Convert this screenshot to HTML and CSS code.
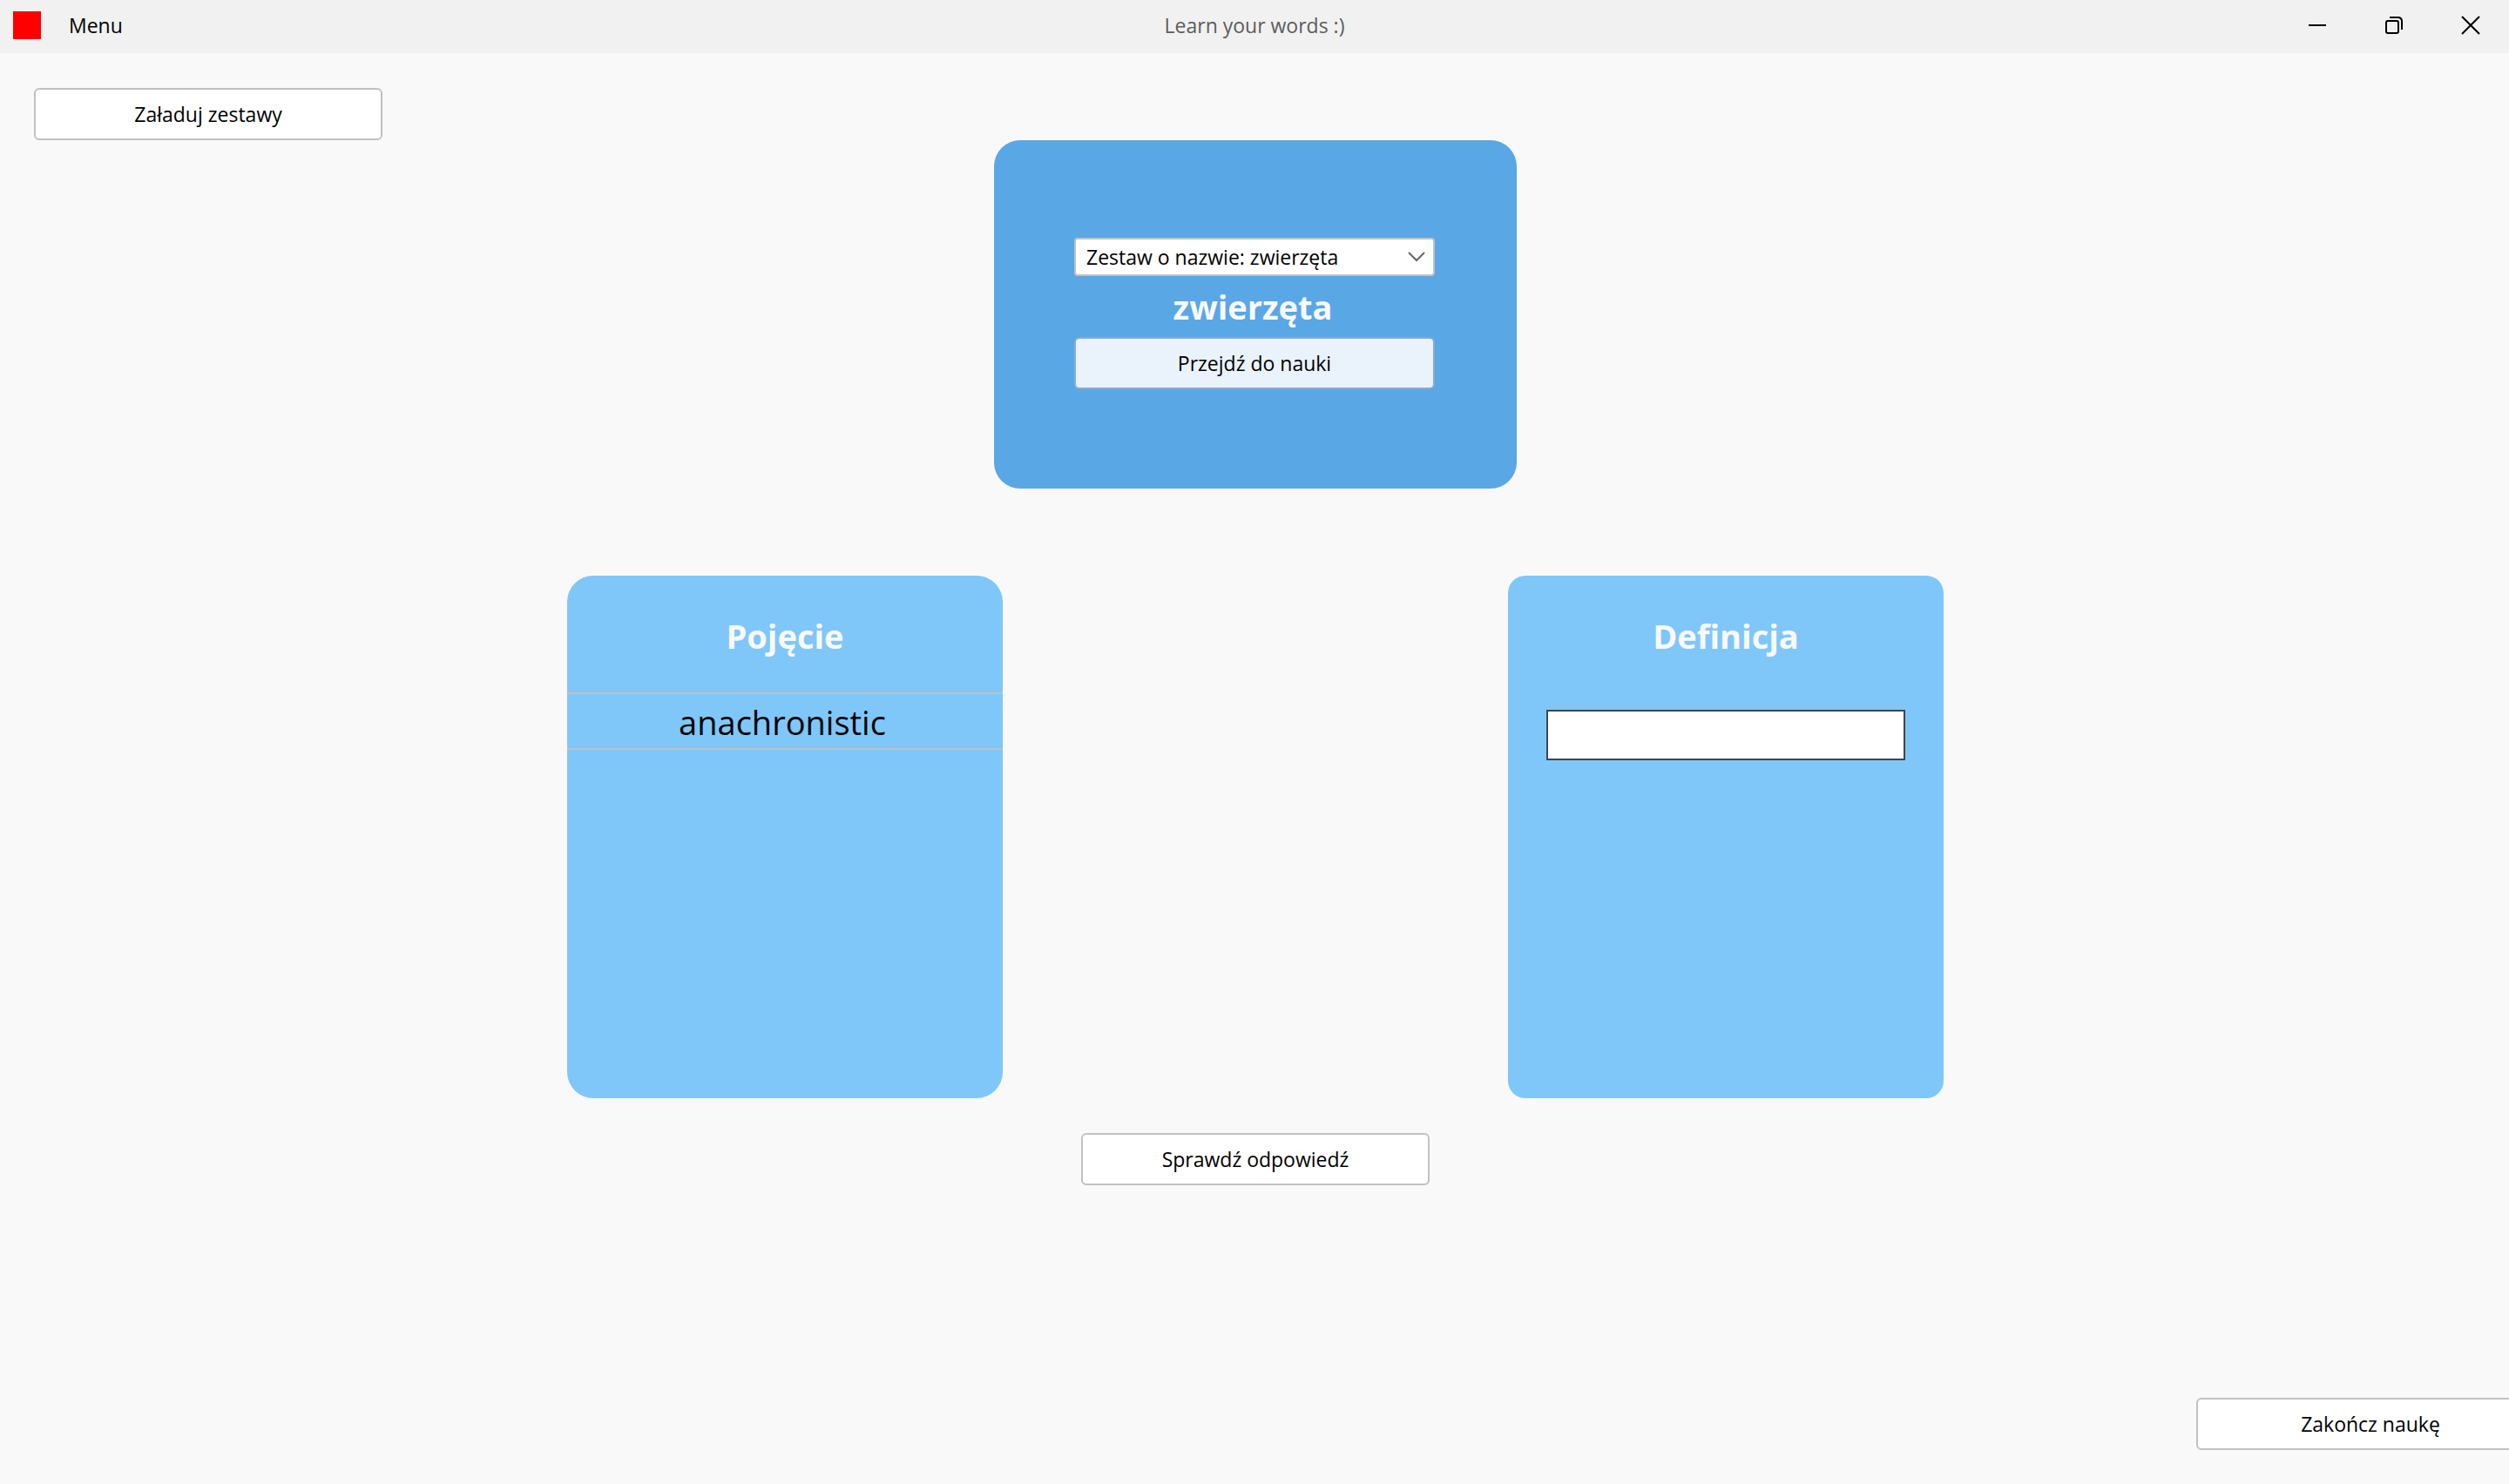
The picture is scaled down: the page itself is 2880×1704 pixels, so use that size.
FILE: index.html
```html
<!DOCTYPE html>
<html lang="pl">
<head>
<meta charset="utf-8">
<meta name="viewport" content="width=device-width, initial-scale=1">
<title>Learn your words :)</title>
<link rel="stylesheet" href="styles.css">
</head>
<body>
<header class="titlebar">
  <nav class="titlebar-left">
    <span class="app-icon"></span>
    <button class="menu" type="button">Menu</button>
  </nav>
  <span class="title">Learn your words :)</span>
  <div class="window-controls">
    <button type="button" aria-label="Minimalizuj"><svg viewBox="0 0 24 24"><path d="M2 12H22"/></svg></button>
    <button type="button" aria-label="Przywróć"><svg viewBox="0 0 24 24"><rect x="3" y="7" width="14" height="14" rx="2"/><path d="M7 3H16.500Q21 3 21 7.500V17"/></svg></button>
    <button type="button" aria-label="Zamknij"><svg viewBox="0 0 24 24"><path d="M2 2L22 22M22 2L2 22"/></svg></button>
  </div>
</header>
<main class="content">
  <button class="btn" type="button">Załaduj zestawy</button>
  <section class="set-card">
    <select class="set-select" aria-label="Zestaw">
      <option>Zestaw o nazwie: zwierzęta</option>
    </select>
    <h1 class="heading set-name">zwierzęta</h1>
    <button class="btn btn-hover" type="button">Przejdź do nauki</button>
  </section>
  <div class="panels">
    <section class="panel panel-term">
      <h2 class="heading">Pojęcie</h2>
      <p class="term">anachronistic</p>
    </section>
    <section class="panel panel-definition">
      <h2 class="heading"><label for="definition">Definicja</label></h2>
      <input class="answer" id="definition" type="text">
    </section>
  </div>
  <button class="btn btn-check" type="button">Sprawdź odpowiedź</button>
  <button class="btn btn-end" type="button">Zakończ naukę</button>
</main>
</body>
</html>
```
FILE: styles.css
```css
* {
  box-sizing: border-box;
}

body {
  margin: 0;
  min-height: 100vh;
  display: flex;
  flex-direction: column;
  overflow-x: hidden;
  background: #f9f9f9;
  color: #000;
  font-family: "Open Sans", "Noto Sans", sans-serif;
  font-size: 23px;
  line-height: 32px;
  font-variant-ligatures: none;
}

button,
select,
input {
  font: inherit;
  color: inherit;
}

.titlebar {
  display: grid;
  grid-template-columns: 1fr auto 1fr;
  align-items: center;
  height: 61px;
  padding-bottom: 3px;
  background: #f1f1f1;
}

.titlebar-left {
  display: flex;
  align-items: center;
  gap: 16px;
  padding-left: 15px;
}

.app-icon {
  width: 32px;
  height: 32px;
  background: #f00;
}

.menu {
  padding: 0 16px;
  border: 0;
  background: none;
}

.title {
  color: #5c5c5c;
}

.window-controls {
  display: flex;
  justify-content: flex-end;
}

.window-controls button {
  display: grid;
  place-items: center;
  width: 88px;
  height: 58px;
  padding: 0;
  border: 0;
  background: none;
}

.window-controls svg {
  width: 24px;
  height: 24px;
  fill: none;
  stroke: #000;
  stroke-width: 2;
}

.content {
  flex: 1;
  display: flex;
  flex-direction: column;
  padding: 40px 0 39px 2px;
}

.btn {
  width: 400px;
  height: 60px;
  padding: 0;
  margin-left: 37px;
  border: 2px solid #c1c1c1;
  border-radius: 6px;
  background: #fff;
}

.set-card {
  align-self: center;
  display: flex;
  flex-direction: column;
  justify-content: center;
  width: 600px;
  height: 400px;
  padding: 0 94px 2px 92px;
  border-radius: 30px;
  background: #5aa7e6;
}

.set-select {
  height: 44px;
  padding: 0 44px 0 12px;
  border: 2px solid #c1c1c1;
  border-radius: 4px;
  appearance: none;
  background: #fff url("data:image/svg+xml,%3Csvg xmlns='http://www.w3.org/2000/svg' width='20' height='12' fill='none' stroke='%23666' stroke-width='2'%3E%3Cpath d='M1 1L10 10L19 1'/%3E%3C/svg%3E") no-repeat right 9px center;
}

.heading {
  margin: 0;
  color: #f9f9f9;
  font-size: 38px;
  line-height: 70px;
  font-weight: 700;
  text-align: center;
}

.set-card .btn {
  width: 100%;
  margin: 0;
}

.set-name {
  padding-right: 4px;
}

.btn-hover {
  border-color: #85acd5;
  background: #eaf2fb;
}

.panels {
  display: flex;
  justify-content: center;
  gap: 580px;
  margin-top: 100px;
}

.panel {
  width: 500px;
  height: 600px;
  padding-top: 34px;
  background: #80c7f9;
}

.panel-term {
  border-radius: 30px;
}

.panel-definition {
  border-radius: 20px;
}

.term {
  margin: 30px 0 0;
  padding: 2px 6px 0 0;
  border: solid #c1c1c1;
  border-width: 2px 0;
  font-size: 38px;
  line-height: 60px;
  text-align: center;
}

.answer {
  display: block;
  width: 412px;
  height: 58px;
  margin: 50px auto 0;
  padding: 0 12px;
  border: 2px solid #444;
  border-radius: 0;
  background: #fff;
}

.btn-check {
  align-self: center;
  margin: 40px 0 0;
}

.btn-end {
  align-self: flex-end;
  margin: auto -41px 0 0;
}
```
